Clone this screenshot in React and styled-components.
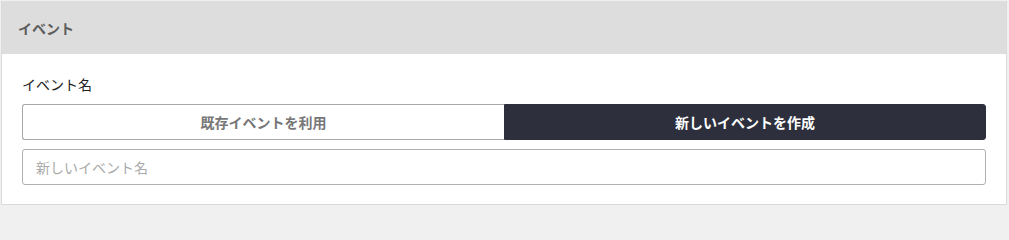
import React, { useState } from 'react';
import styled, { createGlobalStyle } from 'styled-components';

const GlobalStyle = createGlobalStyle`
  html, body {
    margin: 0;
    padding: 0;
    background: #f0f0f0;
  }
  body {
    font-family: 'Noto Sans CJK JP', 'Noto Sans', sans-serif;
    font-size: 14px;
    color: #222;
  }
`;

const Page = styled.div`
  padding: 1px 2px 1px 1px;
`;

const Card = styled.section`
  background: #fff;
  border: 1px solid #dadada;
  border-top: none;
`;

const CardHeader = styled.header`
  height: 53px;
  display: flex;
  align-items: center;
  padding: 0 16px;
  background: #dddddd;
  color: #5c5c5c;
  font-weight: 700;
  font-size: 14px;
`;

const CardBody = styled.div`
  padding: 20px 20px 19px;
  display: flex;
  flex-direction: column;
`;

const Label = styled.label`
  line-height: 20px;
  font-size: 14px;
  color: #222;
  margin-bottom: 10px;
`;

const Toggle = styled.div`
  display: grid;
  grid-template-columns: 1fr 1fr;
  height: 36px;
  margin-bottom: 9px;
`;

const ToggleButton = styled.button`
  font-family: inherit;
  font-size: 14px;
  font-weight: 700;
  cursor: pointer;
  border: 1px solid ${p => (p.$active ? '#2d2f3c' : '#a8a8a8')};
  background: ${p => (p.$active ? '#2d2f3c' : '#fff')};
  color: ${p => (p.$active ? '#fff' : '#777')};
  border-radius: ${p => (p.$side === 'left' ? '3px 0 0 3px' : '0 3px 3px 0')};
  ${p => (p.$side === 'left' ? 'border-right: none;' : '')}
  padding: 0;
`;

const TextInput = styled.input`
  height: 36px;
  box-sizing: border-box;
  border: 1px solid #b0b0b0;
  border-radius: 3px;
  padding: 0 13px;
  font-family: inherit;
  font-size: 14px;
  color: #222;
  outline: none;

  &::placeholder {
    color: #aaa;
  }
`;

const App = () => {
  const [mode, setMode] = useState('new');

  return (
    <Page>
      <GlobalStyle />
      <Card>
        <CardHeader>イベント</CardHeader>
        <CardBody>
          <Label>イベント名</Label>
          <Toggle>
            <ToggleButton
              $side="left"
              $active={mode === 'existing'}
              onClick={() => setMode('existing')}
            >
              既存イベントを利用
            </ToggleButton>
            <ToggleButton
              $side="right"
              $active={mode === 'new'}
              onClick={() => setMode('new')}
            >
              新しいイベントを作成
            </ToggleButton>
          </Toggle>
          <TextInput placeholder="新しいイベント名" />
        </CardBody>
      </Card>
    </Page>
  );
};

export default App;
